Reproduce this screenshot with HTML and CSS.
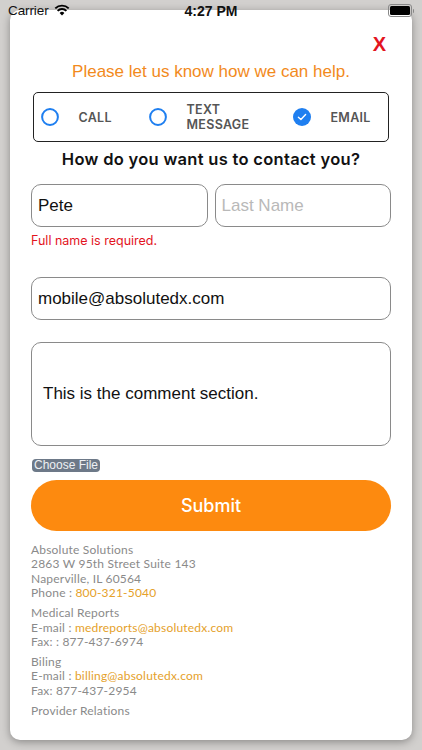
FILE: index.html
```html
<!DOCTYPE html>
<html>
<head>
<meta charset="utf-8">
<link rel="stylesheet" href="styles.css">
</head>
<body>
<div class="status">
  <div class="carrier">Carrier
    <svg class="wifi" width="16" height="12" viewBox="0 0 16 12"><path d="M8 11.5 L5.6 8.9 A3.4 3.4 0 0 1 10.4 8.9 Z" fill="#000"/><path d="M3.6 6.8 A6.2 6.2 0 0 1 12.4 6.8" stroke="#000" stroke-width="1.9" fill="none"/><path d="M1.3 4.4 A9.5 9.5 0 0 1 14.7 4.4" stroke="#000" stroke-width="1.9" fill="none"/></svg>
  </div>
  <div class="time">4:27 PM</div>
  <div class="battery"><span class="batt-body"><span class="batt-fill"></span></span><span class="batt-tip"></span></div>
</div>
<div class="card">
  <div class="close-row"><span class="close">X</span></div>
  <h1 class="help">Please let us know how we can help.</h1>
  <div class="radios">
    <div class="opt">
      <svg width="18" height="18" viewBox="0 0 18 18"><circle cx="9" cy="9" r="7.9" fill="none" stroke="#1f7ff0" stroke-width="2"/></svg>
      <span class="opt-label">CALL</span>
    </div>
    <div class="opt">
      <svg width="18" height="18" viewBox="0 0 18 18"><circle cx="9" cy="9" r="7.9" fill="none" stroke="#1f7ff0" stroke-width="2"/></svg>
      <span class="opt-label">TEXT<br>MESSAGE</span>
    </div>
    <div class="opt">
      <svg width="18" height="18" viewBox="0 0 18 18"><circle cx="9" cy="9" r="9" fill="#1f7ff0"/><path d="M5.4 9.3 L7.9 11.6 L12.6 6.6" fill="none" stroke="#fff" stroke-width="1.4" stroke-linecap="round" stroke-linejoin="round"/></svg>
      <span class="opt-label">EMAIL</span>
    </div>
  </div>
  <h2 class="question">How do you want us to contact you?</h2>
  <div class="name-row">
    <div class="field">Pete</div>
    <div class="field placeholder">Last Name</div>
  </div>
  <p class="error">Full name is required.</p>
  <div class="field email">mobile@absolutedx.com</div>
  <div class="comment">This is the comment section.</div>
  <div class="file-row"><span class="choose">Choose File</span></div>
  <div class="submit">Submit</div>
  <div class="footer">
    <p>Absolute Solutions<br>2863 W 95th Street Suite 143<br>Naperville, IL 60564<br>Phone : <span class="link">800-321-5040</span></p>
    <p>Medical Reports<br>E-mail : <span class="link">medreports@absolutedx.com</span><br>Fax: : 877-437-6974</p>
    <p>Biling<br>E-mail : <span class="link">billing@absolutedx.com</span><br>Fax: 877-437-2954</p>
    <p>Provider Relations</p>
  </div>
</div>
</body>
</html>
```
FILE: styles.css
```css
html, body {
  margin: 0;
  padding: 0;
}
body {
  width: 422px;
  height: 750px;
  overflow: hidden;
  background: #d2d0ce;
  font-family: "Liberation Sans", Arial, sans-serif;
  position: relative;
}
.status {
  position: absolute;
  top: 0;
  left: 0;
  right: 0;
  height: 22px;
  z-index: 2;
}
.carrier {
  position: absolute;
  left: 8px;
  top: 3px;
  font-size: 13.5px;
  color: #111;
  display: flex;
  align-items: center;
  gap: 5px;
  letter-spacing: -0.1px;
}
.wifi {
  margin-top: -2px;
}
.time {
  position: absolute;
  left: 0;
  right: 0;
  top: 3px;
  text-align: center;
  font-size: 14px;
  font-weight: bold;
  color: #111;
}
.battery {
  position: absolute;
  right: 8px;
  top: 4px;
  display: flex;
  align-items: center;
}
.batt-body {
  width: 20px;
  height: 9px;
  border: 1px solid #888;
  border-radius: 3px;
  padding: 1px;
  box-sizing: content-box;
  display: flex;
}
.batt-fill {
  flex: 1;
  background: #000;
  border-radius: 1.5px;
}
.batt-tip {
  width: 1.5px;
  height: 4px;
  background: #888;
  margin-left: 1px;
  border-radius: 0 1px 1px 0;
}
.card {
  margin: 10px 10px 0;
  height: 730px;
  box-sizing: border-box;
  background: #fff;
  border-radius: 10px;
  box-shadow: 0 2px 8px rgba(0, 0, 0, 0.35);
  padding: 0 21px;
  overflow: hidden;
}
.close-row {
  display: flex;
  justify-content: flex-end;
  padding-top: 24px;
  padding-right: 5px;
  height: 26px;
}
.close {
  color: #e3141e;
  font-weight: bold;
  font-size: 20px;
  line-height: 20px;
}
.help {
  margin: 2px 0 0;
  text-align: center;
  color: #f28a1c;
  font-weight: normal;
  font-size: 17px;
  line-height: 20px;
}
.radios {
  margin: 10px 2px 0;
  height: 50px;
  box-sizing: border-box;
  border: 1.5px solid #222;
  border-radius: 5px;
  display: grid;
  grid-template-columns: 108px 144px 1fr;
  align-items: center;
  padding-left: 6.5px;
}
.opt {
  display: flex;
  align-items: center;
  gap: 20px;
}
.opt svg {
  flex: none;
}
.opt-label {
  font-family: Inter, "Open Sans", sans-serif;
  font-size: 12.5px;
  font-weight: 600;
  color: #555;
  line-height: 15px;
  letter-spacing: 0.3px;
}
.question {
  margin: 7px 0 0;
  text-align: center;
  font-family: Inter, "Open Sans", sans-serif;
  font-weight: 600;
  font-size: 16.5px;
  line-height: 20px;
  color: #111;
  letter-spacing: 0.3px;
}
.name-row {
  margin-top: 15px;
  display: grid;
  grid-template-columns: 1fr 1fr;
  gap: 7px;
}
.field {
  height: 43px;
  box-sizing: border-box;
  border: 1px solid #8a8a8a;
  border-radius: 10px;
  padding: 0 6px;
  display: flex;
  align-items: center;
  font-size: 17px;
  color: #111;
}
.placeholder {
  color: #b9b9b9;
}
.error {
  margin: 6px 0 0;
  font-family: Inter, "Open Sans", sans-serif;
  font-size: 12.5px;
  line-height: 16px;
  color: #e3141e;
}
.email {
  margin-top: 28px;
}
.comment {
  margin-top: 22px;
  height: 104px;
  box-sizing: border-box;
  border: 1px solid #8a8a8a;
  border-radius: 10px;
  padding: 0 11px;
  display: flex;
  align-items: center;
  font-size: 17px;
  color: #111;
}
.file-row {
  margin-top: 13px;
  height: 13px;
  display: flex;
}
.choose {
  background: #6d7988;
  color: #eef0f3;
  font-size: 12px;
  line-height: 13px;
  padding: 0 2px;
  border-radius: 4px;
  margin-left: 1px;
}
.submit {
  margin-top: 8px;
  height: 51px;
  border-radius: 26px;
  background: #fd8a0f;
  color: #fff;
  font-size: 18px;
  font-weight: 500;
  display: flex;
  align-items: center;
  justify-content: center;
  font-family: Inter, "Liberation Sans", sans-serif;
}
.footer {
  margin-top: 12px;
  font-family: Lato, "Open Sans", sans-serif;
  font-size: 12px;
  line-height: 14.4px;
  letter-spacing: 0.2px;
  color: #8a8a8a;
}
.footer p {
  margin: 0 0 5.5px;
}
.link {
  color: #e5a12a;
}
```
